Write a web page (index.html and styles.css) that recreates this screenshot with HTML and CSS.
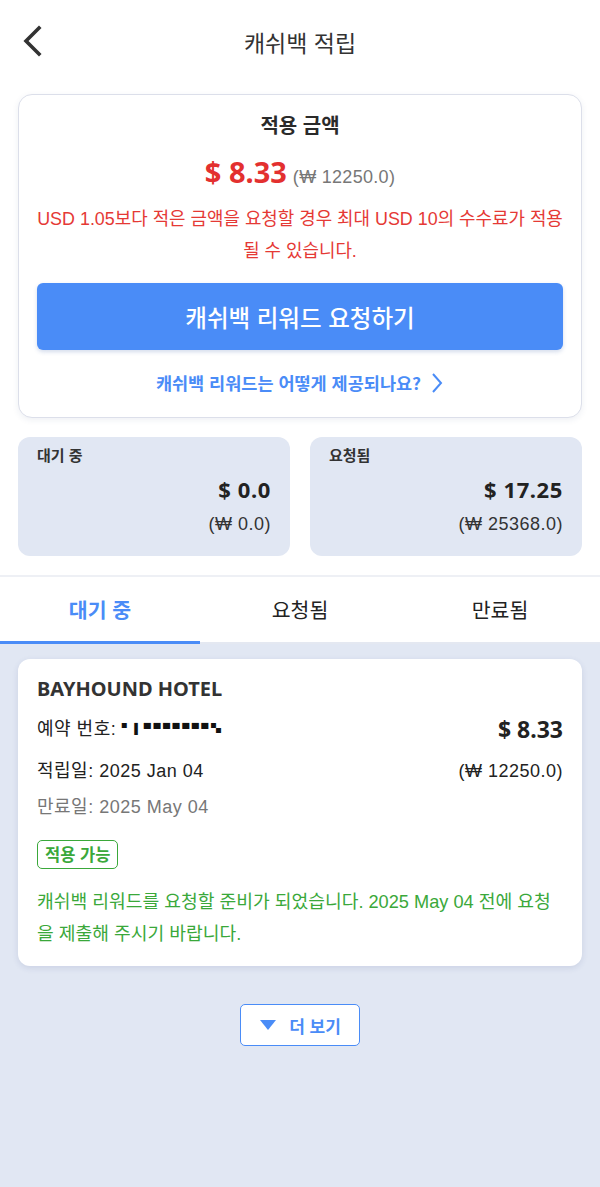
FILE: index.html
```html
<!doctype html>
<html lang="ko">
<head>
  <meta charset="utf-8">
  <meta name="viewport" content="width=device-width,initial-scale=1">
  <title>캐쉬백 적립</title>
  <link rel="stylesheet" href="styles.css">
</head>
<body>

  <div class="upper">
    <header class="topbar">
      <a class="back" href="#" aria-label="뒤로">
        <svg width="24" height="32" viewBox="0 0 24 32"><path d="M19 3 L6 16 L19 29" fill="none" stroke="#333" stroke-width="3.6" stroke-linecap="square"/></svg>
      </a>
      <h1>캐쉬백 적립</h1>
      <span></span>
    </header>

    <!-- amount summary -->
    <section class="summary">
      <h2>적용 금액</h2>
      <p class="amount"><strong>$ 8.33</strong><span>(₩ 12250.0)</span></p>
      <p class="notice">USD 1.05보다 적은 금액을 요청할 경우 최대 USD 10의 수수료가 적용될 수 있습니다.</p>
      <button type="button" class="request">캐쉬백 리워드 요청하기</button>
      <a class="howto" href="#">캐쉬백 리워드는 어떻게 제공되나요?
        <svg width="14" height="22" viewBox="0 0 14 22"><path d="M3 2 L11 11 L3 20" fill="none" stroke="#4a8cf7" stroke-width="2"/></svg>
      </a>
    </section>

    <section class="stats">
      <div class="stat">
        <div class="stat-label">대기 중</div>
        <div class="stat-usd">$ 0.0</div>
        <div class="stat-krw">(₩ 0.0)</div>
      </div>
      <div class="stat">
        <div class="stat-label">요청됨</div>
        <div class="stat-usd">$ 17.25</div>
        <div class="stat-krw">(₩ 25368.0)</div>
      </div>
    </section>

    <nav class="tabs">
      <a href="#" class="tab active">대기 중</a>
      <a href="#" class="tab">요청됨</a>
      <a href="#" class="tab">만료됨</a>
    </nav>
  </div>

  <main class="list">
    <article class="item">
      <h3>BAYHOUND HOTEL</h3>
      <div class="row row-first">
        <span>예약 번호: <span class="masked">▘▌▀▀▀▀▀▀▀▚</span></span>
        <strong class="usd">$ 8.33</strong>
      </div>
      <div class="row">
        <span>적립일: 2025 Jan 04</span>
        <span>(₩ 12250.0)</span>
      </div>
      <div class="row expire">만료일: 2025 May 04</div>
      <span class="badge">적용 가능</span>
      <p class="ready">캐쉬백 리워드를 요청할 준비가 되었습니다. 2025 May 04 전에 요청을 제출해 주시기 바랍니다.</p>
    </article>

    <div class="more-wrap">
      <button type="button" class="more">
        <svg width="18" height="12" viewBox="0 0 18 12"><path d="M1 1 H17 L9 11 Z" fill="#4a8cf7"/></svg>
        더 보기
      </button>
    </div>
  </main>

</body>
</html>
```

FILE: styles.css
```css
body{
  margin:0; width:600px; min-height:1187px;
  font-family:"Liberation Sans","Noto Sans CJK KR",sans-serif;
  color:#222; background:#e1e7f3;
}
.upper{background:#fff; overflow:hidden;}
.topbar{
  display:grid; grid-template-columns:60px 1fr 60px; align-items:center;
  height:84px;
}
.back{display:flex; padding-left:20px; margin-top:-2px;}
.topbar h1{
  margin:0; text-align:center; font-size:23px; font-weight:400; color:#333;
  font-family:"Noto Sans CJK KR",sans-serif;
}
.summary{
  margin:10px 18px 0; padding:18px 18px 22px;
  background:#fff; border:1px solid #dcdfea; border-radius:14px;
  box-shadow:0 2px 6px rgba(40,60,120,.08);
  text-align:center;
}
.summary h2{
  margin:0; font-size:20px; line-height:24px; font-weight:700; color:#2a2a2a;
  font-family:"Noto Sans CJK KR",sans-serif;
}
.amount{
  display:flex; justify-content:center; align-items:baseline; gap:6px;
  height:36px; margin:17px 0 0; line-height:36px;
}
.amount strong{font-family:"Noto Sans",sans-serif; font-size:29px; color:#e3302f; font-weight:700;}
.amount span{font-size:18px; color:#777; letter-spacing:.3px;}
.notice{
  margin:13px 0 0; font-size:17.9px; line-height:32px; color:#e53935;
}
.request{
  display:block; width:100%; height:67px; margin-top:16px;
  background:#4a8cf7; color:#fff; border:none; border-radius:6px;
  font-family:"Noto Sans CJK KR",sans-serif; font-size:23.5px; font-weight:500;
  box-shadow:0 2px 4px rgba(40,80,160,.2); cursor:pointer;
}
.howto{
  display:inline-flex; align-items:center; gap:9px; margin-top:21px;
  font-family:"Noto Sans CJK KR",sans-serif;
  font-size:17.5px; line-height:24px; font-weight:700; color:#4a8cf7; text-decoration:none;
}
.stats{
  display:grid; grid-template-columns:1fr 1fr; gap:20px;
  padding:19px 18px;
}
.stat{
  background:#e1e7f3; border-radius:12px; padding:8px 19px 17px; text-align:right;
}
.stat-label{
  text-align:left; line-height:20px;
  font-family:"Noto Sans CJK KR",sans-serif; font-size:15px; font-weight:700; color:#333;
}
.stat-usd{margin-top:9px; font-family:"Noto Sans",sans-serif; font-size:22px; line-height:30px; font-weight:700; color:#222; letter-spacing:.6px;}
.stat-krw{margin-top:5px; font-size:18px; line-height:30px; letter-spacing:.5px; color:#333;}
.tabs{
  display:grid; grid-template-columns:1fr 1fr 1fr;
  border-top:2px solid #eef0f5; border-bottom:2px solid #e4e8f1;
}
.tab{
  height:64px; display:flex; align-items:center; justify-content:center;
  font-family:"Noto Sans CJK KR",sans-serif; font-size:20.5px; color:#222; text-decoration:none;
  border-bottom:3px solid transparent; margin-bottom:-2px;
}
.tab.active{color:#4a8cf7; font-weight:700; border-bottom-color:#4a8cf7;}
.list{padding:15px 18px 60px;}
.item{
  background:#fff; border-radius:12px; padding:17px 19px 16px;
  box-shadow:0 2px 6px rgba(40,60,120,.12);
}
.item h3{margin:0; font-size:20px; line-height:26px; font-weight:700; color:#333; font-family:"Noto Sans",sans-serif;}
.row{
  display:flex; justify-content:space-between; align-items:center;
  margin-top:12px; font-size:18px; line-height:30px; letter-spacing:.5px; color:#222;
}
.row .usd{font-family:"Noto Sans",sans-serif; font-size:23px; font-weight:700; letter-spacing:0; color:#222;}
.masked{font-size:10px; letter-spacing:2.5px; color:#111; vertical-align:3px;}
.row.expire{margin-top:8px; line-height:26px; color:#777;}
.badge{
  display:inline-block; margin-top:20px; padding:0 7px; height:27px; line-height:27px;
  border:1.5px solid #3aa83a; border-radius:5px;
  font-family:"Noto Sans CJK KR",sans-serif; font-size:16.5px; font-weight:700; color:#3aa83a;
}
.ready{margin:17px 0 0; font-size:18.2px; line-height:32px; color:#3aa83a;}
.more-wrap{display:flex; justify-content:center; margin-top:38px;}
.more{
  display:flex; align-items:center; gap:12px; justify-content:center;
  width:120px; height:42px; background:#fff; border:1.5px solid #4a8cf7; border-radius:5px;
  font-family:"Noto Sans CJK KR",sans-serif; font-size:17px; font-weight:700; color:#4a8cf7; cursor:pointer;
}
```
